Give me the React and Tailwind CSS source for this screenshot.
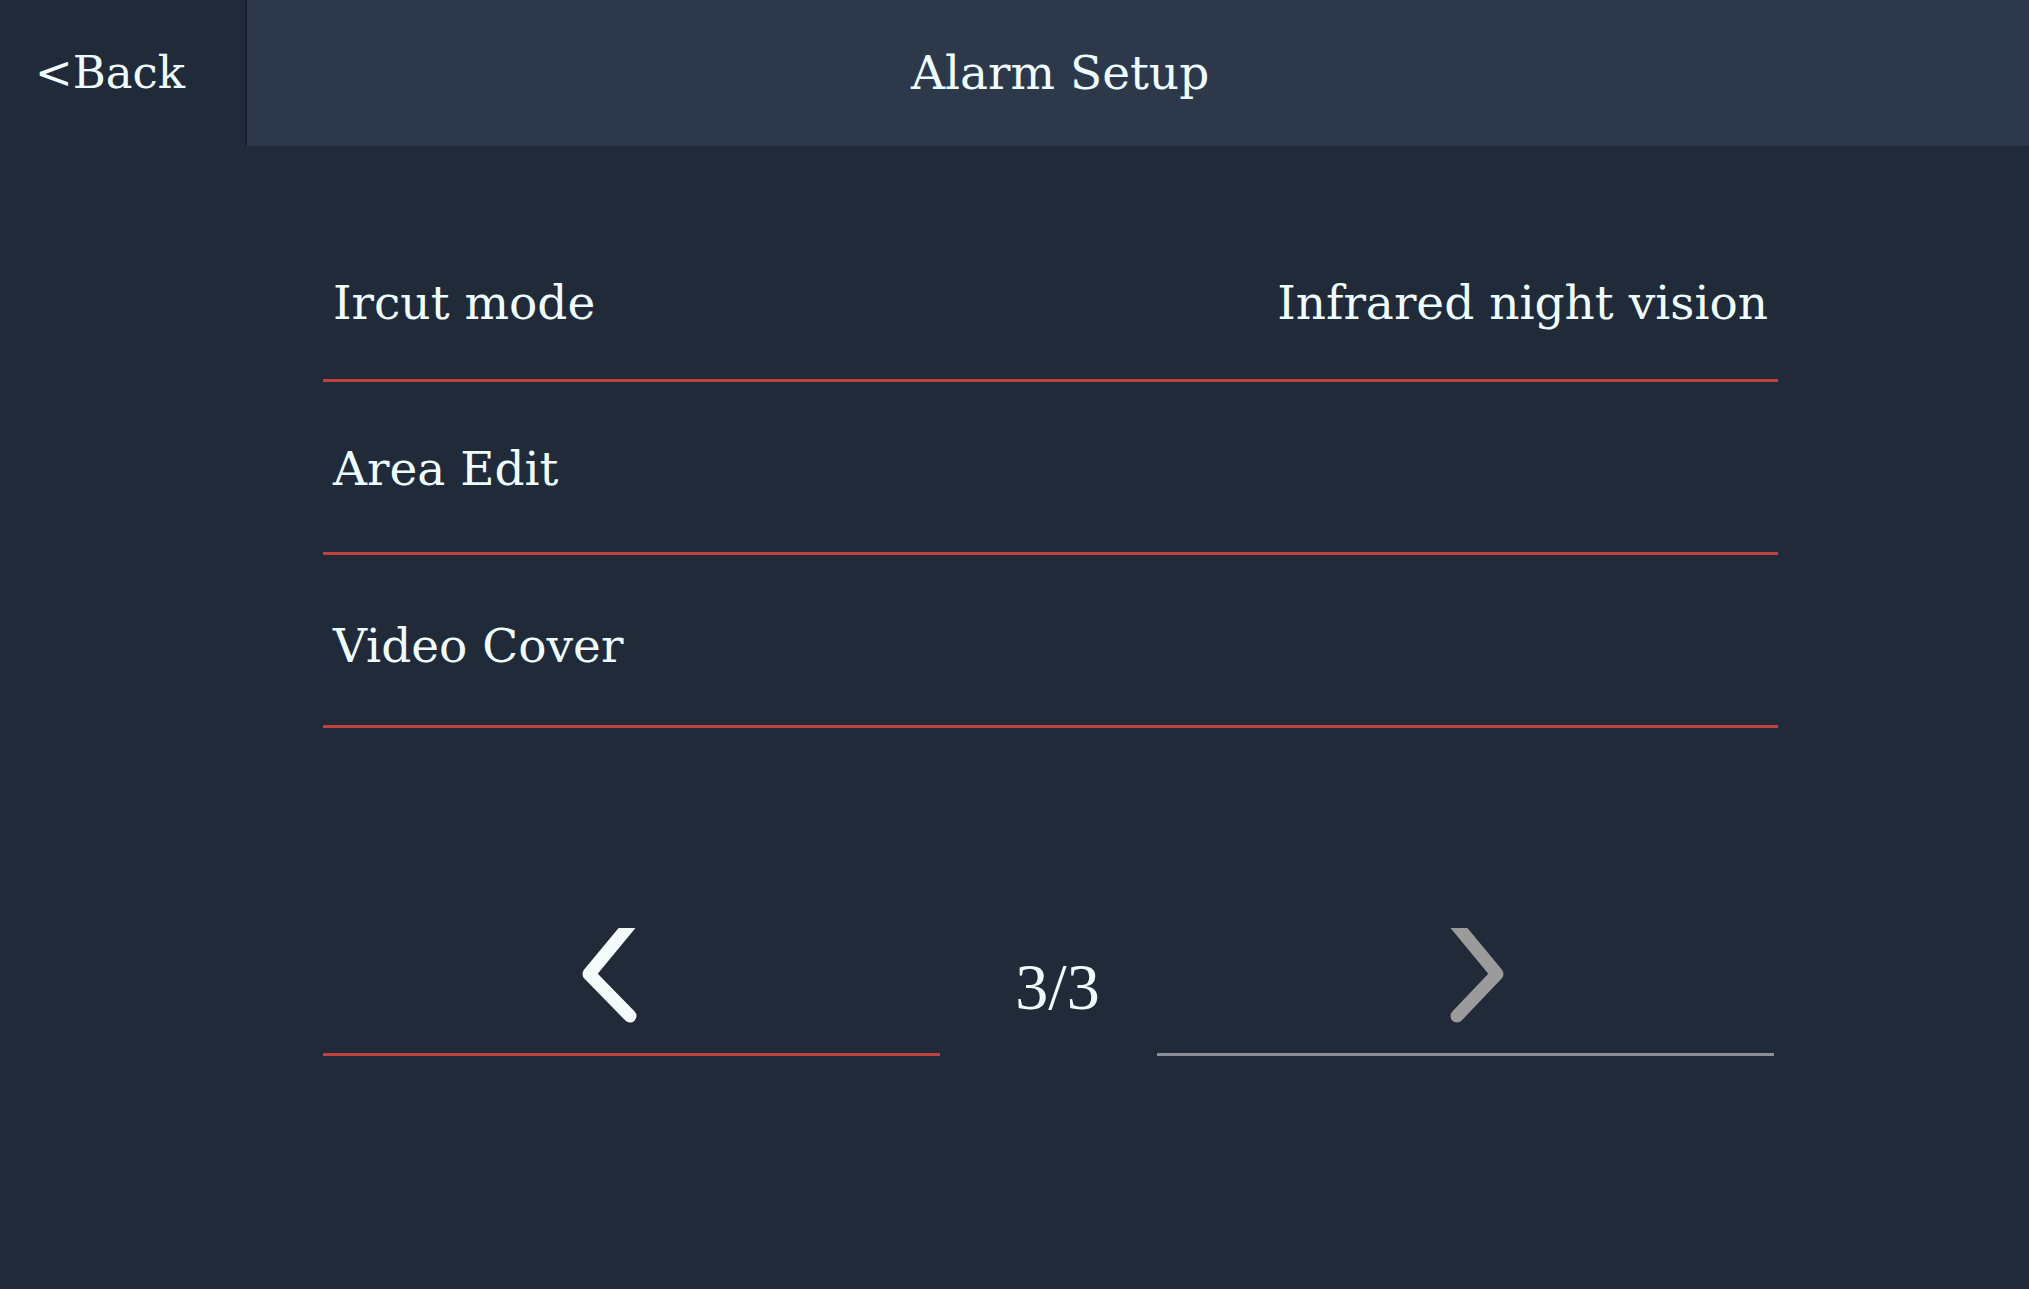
import React from "react";

const rows = [
  { label: "Ircut mode", value: "Infrared night vision", pad: "pt-[18px]" },
  { label: "Area Edit", value: "", pad: "pt-[5px]" },
  { label: "Video Cover", value: "", pad: "pt-[12px]" },
];

const ChevronLeft = () => (
  <svg width="58" height="96" viewBox="0 0 58 96" className="block">
    <polyline
      points="50,-6 7,46 48,88"
      fill="none"
      stroke="#f4fbfb"
      strokeWidth="13"
      strokeLinecap="round"
      strokeLinejoin="round"
    />
  </svg>
);

const ChevronRight = () => (
  <svg width="58" height="96" viewBox="0 0 58 96" className="block">
    <polyline
      points="5,-6 48,46 8,88"
      fill="none"
      stroke="#9b9b9b"
      strokeWidth="13"
      strokeLinecap="round"
      strokeLinejoin="round"
    />
  </svg>
);

const App = () => {
  return (
    <div className="min-h-screen bg-[#212a39] text-[#effcfd] font-['DejaVu_Serif',serif]">
      {/* Barra superior */}
      <div className="flex h-[146px] bg-[#2d384b]">
        <button className="w-[247px] h-full bg-[#212a38] border-r-2 border-[#19202b] flex items-center pl-[35px] text-[45px] text-[#effcfd]">
          &lt;Back
        </button>
        <div className="flex-1 flex items-center pl-[664px] text-[47px]">
          Alarm Setup
        </div>
      </div>

      {/* Lista de opciones */}
      <div className="ml-[323px] w-[1455px] mt-[63px]">
        {rows.map((row) => (
          <div
            key={row.label}
            className={`h-[173px] flex items-center justify-between pl-[10px] pr-[10px] border-b-[3px] border-[#c1413f] text-[47px] ${row.pad}`}
          >
            <span>{row.label}</span>
            <span>{row.value}</span>
          </div>
        ))}
      </div>

      {/* Paginación */}
      <div className="ml-[323px] mt-[200px] flex">
        <div className="w-[617px] pl-[259px] pb-[29px] border-b-[3px] border-[#c1413f]">
          <ChevronLeft />
        </div>
        <div className="w-[217px] flex justify-center pl-[18px]">
          <span className="block pt-[26px] leading-none text-[66px] font-['Liberation_Serif',serif]">
            3/3
          </span>
        </div>
        <div className="w-[617px] pl-[292px] pb-[29px] border-b-[3px] border-[#8a8e97]">
          <ChevronRight />
        </div>
      </div>
    </div>
  );
};

export default App;
